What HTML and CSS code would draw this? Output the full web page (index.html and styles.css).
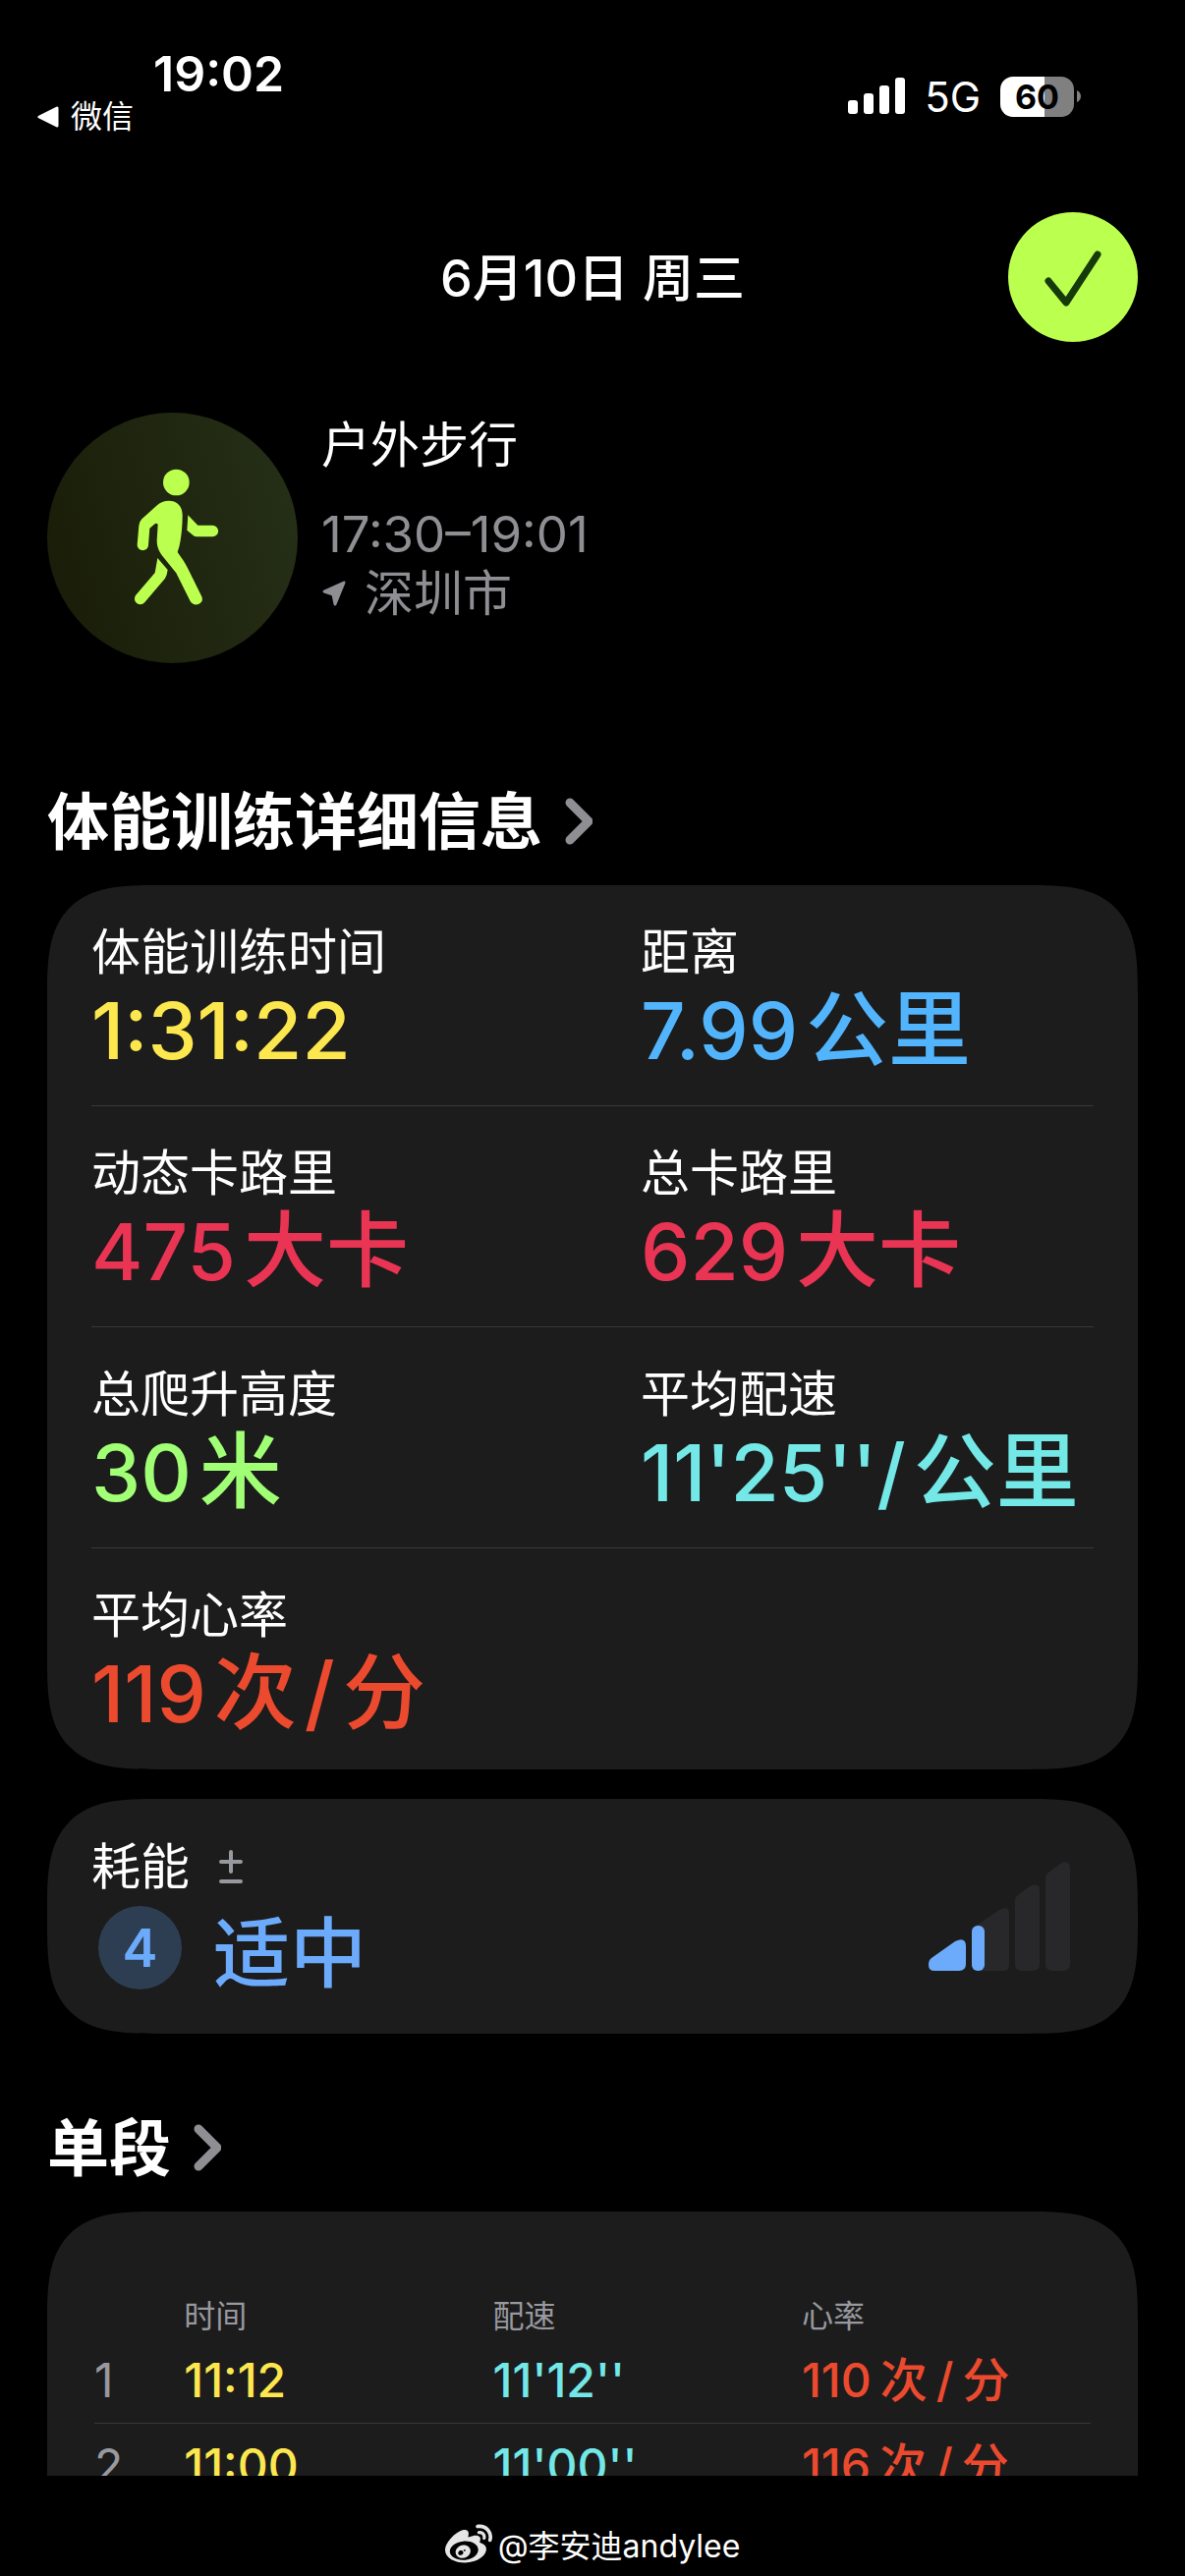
FILE: index.html
```html
<!DOCTYPE html>
<html lang="zh-CN">
<head>
    <meta charset="UTF-8">
    <meta name="viewport" content="width=device-width, initial-scale=1.0">
    <title>户外步行</title>
    <link rel="stylesheet" href="styles.css">
</head>
<body>
    <header class="status">
        <div class="status-left">
            <div class="clock">19:02</div>
            <a class="back" href="#">
                <svg width="22" height="22" viewBox="0 0 22 22"><path d="M2 11 L20 2 V20 Z" fill="#fff" stroke="#fff" stroke-width="3" stroke-linejoin="round"/></svg>
                微信
            </a>
        </div>
        <div class="status-right">
            <svg width="58" height="38" viewBox="0 0 58 38" fill="#fff">
                <rect x="0" y="23" width="10" height="14" rx="3"/>
                <rect x="16" y="16" width="10" height="21" rx="3"/>
                <rect x="32" y="8" width="10" height="29" rx="3"/>
                <rect x="48" y="0" width="10" height="37" rx="3"/>
            </svg>
            <span class="network">5G</span>
            <div class="battery">
                <span class="battery-level">60</span>
                <svg width="4" height="14" viewBox="0 0 4 14"><path d="M0 1 Q4 3 4 7 T0 13 Z" fill="#808080"/></svg>
            </div>
        </div>
    </header>

    <main>
        <nav class="topbar">
            <h1>6月10日 周三</h1>
            <button class="done" type="button" aria-label="完成">
                <svg width="132" height="132" viewBox="0 0 132 132"><path d="M41 70 L59 92 L91 43" fill="none" stroke="#173a0a" stroke-width="7" stroke-linecap="round" stroke-linejoin="round"/></svg>
            </button>
        </nav>

        <section class="workout">
            <div class="workout-icon">
                <svg width="140" height="170" viewBox="-12 7 420 510" fill="#bbff4f">
                    <circle cx="208" cy="91" r="40"/>
                    <path d="M186 147 C211 147 227 164 227 190 C227 225 224 250 221 268 Q218 288 212 304 C225 322 236 338 243 353 L286 440 C296 462 262 474 251 454 L208 368 L168 318 C155 302 149 288 149 268 L152 219 Q147 214 141 219 L127 231 L123 283 C121 304 89 304 89 281 L94 223 Q95 211 103 203 L148 162 Q164 147 186 147 Z"/>
                    <path d="M244 191 L274 222 H319 A17 17 0 0 1 319 257 H271 Q264 257 259 252 L241 237 Z"/>
                    <path d="M151 322 L182 358 Q180 375 174 384 L112 457 C98 474 72 456 84 436 L143 367 Z"/>
                </svg>
            </div>
            <div class="workout-info">
                <h2>户外步行</h2>
                <p class="hours">17:30–19:01</p>
                <p class="place">
                    <svg width="26" height="28" viewBox="0 0 26 28"><path d="M23 3 L3 12 L12 15 L14 25 Z" fill="#8e8e93" stroke="#8e8e93" stroke-width="3" stroke-linejoin="round"/></svg>
                    深圳市
                </p>
            </div>
        </section>

        <a class="section-title first" href="#">
            <h2>体能训练详细信息</h2>
            <svg width="28" height="48" viewBox="0 0 28 48"><path d="M5 5 L24 24 L5 43" /></svg>
        </a>

        <dl class="card stats">
            <div class="stat-row">
                <div class="stat"><dt>体能训练时间</dt><dd class="yellow">1:31:22</dd></div>
                <div class="stat"><dt>距离</dt><dd class="blue">7.99<span class="unit">公里</span></dd></div>
            </div>
            <div class="stat-row">
                <div class="stat"><dt>动态卡路里</dt><dd class="pink">475<span class="unit">大卡</span></dd></div>
                <div class="stat"><dt>总卡路里</dt><dd class="pink">629<span class="unit">大卡</span></dd></div>
            </div>
            <div class="stat-row">
                <div class="stat"><dt>总爬升高度</dt><dd class="green">30<span class="unit">米</span></dd></div>
                <div class="stat"><dt>平均配速</dt><dd class="cyan">11'25''/<span class="unit">公里</span></dd></div>
            </div>
            <div class="stat-row">
                <div class="stat"><dt>平均心率</dt><dd class="red">119<span class="unit">次</span><span class="unit">/</span><span class="unit">分</span></dd></div>
            </div>
        </dl>

        <section class="card effort">
            <div>
                <div class="effort-label">
                    耗能
                    <svg width="24" height="34" viewBox="0 0 24 34"><path d="M2 12 H22 M12 2 V22 M2 32 H22" fill="none" stroke="#98989f" stroke-width="4" stroke-linecap="round"/></svg>
                </div>
                <div class="effort-value">
                    <span class="effort-badge">4</span>
                    <span>适中</span>
                </div>
            </div>
            <svg class="effort-bars" width="144" height="111" viewBox="0 0 144 111" fill="#28282a">
                <path d="M44 68 L72 49 Q82 44 82 53 V105 Q82 111 76 111 H50 Q44 111 44 105 Z"/>
                <path d="M88 39 Q88 36 91 34 L103 25 Q113 20 113 30 V104 Q113 111 106 111 H95 Q88 111 88 104 Z"/>
                <path d="M119 16 Q119 13 122 11 L134 2 Q144 -3 144 7 V104 Q144 111 137 111 H126 Q119 111 119 104 Z"/>
                <path fill="#6cabfb" d="M3 98 L27 81 Q38 76 38 86 V104 Q38 111 31 111 H6 Q0 111 0 105 Q0 100 3 98 Z"/>
                <rect fill="#6cabfb" x="44" y="65" width="13" height="46" rx="6"/>
            </svg>
        </section>

        <a class="section-title" href="#">
            <h2>单段</h2>
            <svg width="28" height="48" viewBox="0 0 28 48"><path d="M5 5 L24 24 L5 43" /></svg>
        </a>

        <section class="card splits">
            <table>
                <thead>
                    <tr><th class="num"></th><th>时间</th><th>配速</th><th class="heart">心率</th></tr>
                </thead>
                <tbody>
                    <tr>
                        <td class="num">1</td>
                        <td class="yellow">11:12</td>
                        <td class="cyan">11'12''</td>
                        <td class="red">110<span class="unit">次</span><span class="unit">/</span><span class="unit">分</span></td>
                    </tr>
                    <tr>
                        <td class="num">2</td>
                        <td class="yellow">11:00</td>
                        <td class="cyan">11'00''</td>
                        <td class="red">116<span class="unit">次</span><span class="unit">/</span><span class="unit">分</span></td>
                    </tr>
                </tbody>
            </table>
        </section>
    </main>

    <footer class="credit">
        <svg width="48" height="48" viewBox="0 0 24 24" fill="#e6e6e6"><path d="M10.098 20.323c-3.977.391-7.414-1.406-7.672-4.02-.259-2.609 2.759-5.047 6.74-5.441 3.979-.394 7.413 1.404 7.671 4.018.259 2.6-2.759 5.049-6.737 5.439l-.002.004zM9.05 17.219c-.384.616-1.208.884-1.829.602-.612-.279-.793-.991-.406-1.593.379-.595 1.176-.861 1.793-.601.622.263.82.972.442 1.592zm1.27-1.627c-.141.237-.449.353-.689.253-.236-.09-.313-.361-.177-.586.138-.227.436-.346.672-.24.239.09.315.36.18.601l.014-.028zm.176-2.719c-1.893-.493-4.033.45-4.857 2.118-.836 1.704-.026 3.591 1.886 4.21 1.983.64 4.318-.341 5.132-2.179.8-1.793-.201-3.642-2.161-4.149zm7.563-1.224c-.346-.105-.57-.18-.405-.615.375-.977.42-1.804 0-2.404-.781-1.112-2.915-1.053-5.364-.03 0 0-.766.331-.571-.271.376-1.217.315-2.224-.27-2.809-1.338-1.337-4.869.045-7.888 3.08C1.309 10.87 0 13.273 0 15.348c0 3.981 5.099 6.395 10.086 6.395 6.536 0 10.888-3.801 10.888-6.82 0-1.822-1.547-2.854-2.915-3.284v.01zm1.908-5.092c-.766-.856-1.908-1.187-2.96-.962-.436.09-.706.511-.616.932.09.42.511.691.932.602.511-.105 1.067.044 1.442.465.376.421.466.977.316 1.473-.136.406.089.856.51.992.405.119.857-.105.992-.512.33-1.021.12-2.178-.646-3.035l.03.045zm2.418-2.195c-1.576-1.757-3.905-2.419-6.054-1.968-.496.104-.812.587-.706 1.081.104.496.586.813 1.082.707 1.532-.331 3.185.15 4.296 1.383 1.112 1.246 1.429 2.943.947 4.416-.165.48.106 1.007.586 1.157.479.165.991-.104 1.157-.586.675-2.088.241-4.478-1.338-6.235l.03.045z"/></svg>
        <span>@李安迪andylee</span>
    </footer>
</body>
</html>
```
FILE: styles.css
```css
:root {
    --card: #1c1c1c;
    --line: #383838;
    --muted: #8e8e93;
    --lime: #bbff4f;
}

* {
    box-sizing: border-box;
}

body {
    margin: 0;
    height: 100vh;
    display: flex;
    flex-direction: column;
    background: #000;
    color: #fff;
    font-family: Inter, "Noto Sans CJK SC", sans-serif;
    font-size: 50px;
}

h1, h2, p, dl, dd {
    margin: 0;
}

a {
    color: inherit;
    text-decoration: none;
}

svg {
    display: block;
    flex: none;
}

/* Status bar */
.status {
    display: flex;
    justify-content: space-between;
    padding: 50px 106px 0 38px;
}

.clock {
    padding-left: 118px;
    line-height: 50px;
    font-weight: 600;
}

.back {
    display: flex;
    align-items: center;
    gap: 12px;
    font-size: 32px;
    line-height: 38px;
}

.status-right {
    display: flex;
    align-items: center;
    height: 96px;
    gap: 20px;
}

.network {
    font-size: 42px;
}

.battery {
    display: flex;
    align-items: center;
    gap: 3px;
}

.battery-level {
    width: 75px;
    border-radius: 13px;
    background: linear-gradient(90deg, #fff 60%, #808080 60%);
    color: #000;
    font-size: 34px;
    font-weight: 700;
    line-height: 41px;
    text-align: center;
}

/* Scrolling page, cut off by the credit bar */
main {
    flex: 1;
    min-height: 0;
    overflow: hidden;
    padding: 70px 48px 0;
}

.topbar {
    display: grid;
    grid-template-columns: 1fr auto 1fr;
    align-items: center;
}

.topbar h1 {
    grid-column: 2;
    margin-bottom: 6px;
    font-size: 52px;
    font-weight: 500;
}

.done {
    justify-self: end;
    width: 132px;
    height: 132px;
    padding: 0;
    border: 0;
    border-radius: 50%;
    background: var(--lime);
}

.workout {
    display: flex;
    gap: 24px;
    margin-top: 72px;
}

.workout-icon {
    display: flex;
    align-items: center;
    justify-content: center;
    width: 255px;
    height: 255px;
    border-radius: 50%;
    background: linear-gradient(75deg, #191c08, #263017);
}

.workout-info {
    line-height: 60px;
    color: var(--muted);
}

.workout-info h2 {
    margin-bottom: 28px;
    color: #fff;
    font-size: 50px;
    font-weight: 400;
    line-height: 66px;
}

.hours {
    font-size: 51px;
}

.place {
    display: flex;
    align-items: center;
    gap: 18px;
}

.section-title {
    display: flex;
    align-items: center;
    gap: 23px;
    margin: 76px 0 25px;
    line-height: 80px;
}

.section-title.first {
    margin-top: 121px;
}

.section-title h2 {
    font-size: 63px;
    font-weight: 700;
}

.section-title path {
    fill: none;
    stroke: var(--muted);
    stroke-width: 9;
    stroke-linecap: round;
    stroke-linejoin: round;
}

.card {
    border-radius: 80px;
    background: var(--card);
}

@supports (corner-shape: superellipse(1.6)) {
    .card {
        border-radius: 112px;
        corner-shape: superellipse(1.6);
    }
}

/* Workout details */
.stats {
    padding: 0 45px;
}

.stat-row {
    display: grid;
    grid-template-columns: calc(50% + 49px) auto;
    justify-content: start;
    height: 225px;
    padding-top: 38px;
    border-bottom: 1px solid var(--line);
}

.stat-row:last-child {
    border-bottom: 0;
}

dt {
    line-height: 60px;
}

dd {
    font-size: 80px;
    font-weight: 500;
    line-height: 100px;
    white-space: nowrap;
}

.unit {
    margin-left: 8px;
    font-size: 84px;
    line-height: 1;
}

.yellow { color: #fde74f; }
.blue { color: #51b4fc; }
.pink { color: #e93454; }
.green { color: #a0ff74; }
.cyan { color: #73e8e6; }
.red { color: #ec4a2e; }

/* Effort */
.effort {
    display: flex;
    align-items: center;
    justify-content: space-between;
    margin-top: 30px;
    padding: 39px 69px 45px 45px;
}

.effort-label {
    display: flex;
    align-items: center;
    gap: 30px;
    line-height: 60px;
}

.effort-value {
    display: flex;
    align-items: center;
    gap: 32px;
    height: 85px;
    margin: 10px 0 0 7px;
    color: #6cabfb;
    font-size: 78px;
    font-weight: 500;
}

.effort-badge {
    width: 85px;
    border-radius: 50%;
    background: #2d3d52;
    font-size: 54px;
    font-weight: 600;
    line-height: 85px;
    text-align: center;
}

.effort-bars {
    margin-top: 6px;
}

/* Splits */
.splits {
    padding: 85px 48px 120px;
}

table {
    width: 100%;
    table-layout: fixed;
    border-collapse: collapse;
}

th, td {
    width: 31%;
    padding: 0;
    text-align: left;
    white-space: nowrap;
}

th {
    height: 44px;
    color: #98989f;
    font-size: 32px;
    font-weight: 400;
    line-height: 44px;
}

td {
    height: 86px;
    border-bottom: 1px solid var(--line);
    font-size: 48px;
    font-weight: 500;
    line-height: 85px;
}

.num {
    width: 9%;
    color: #98989f;
    font-weight: 400;
}

.heart {
    width: 29%;
}

.splits .unit {
    margin-left: 9px;
    font-size: 48px;
}

.credit {
    display: flex;
    align-items: center;
    justify-content: center;
    gap: 6px;
    height: 102px;
    padding-top: 36px;
    flex: none;
    font-size: 32px;
}
```
